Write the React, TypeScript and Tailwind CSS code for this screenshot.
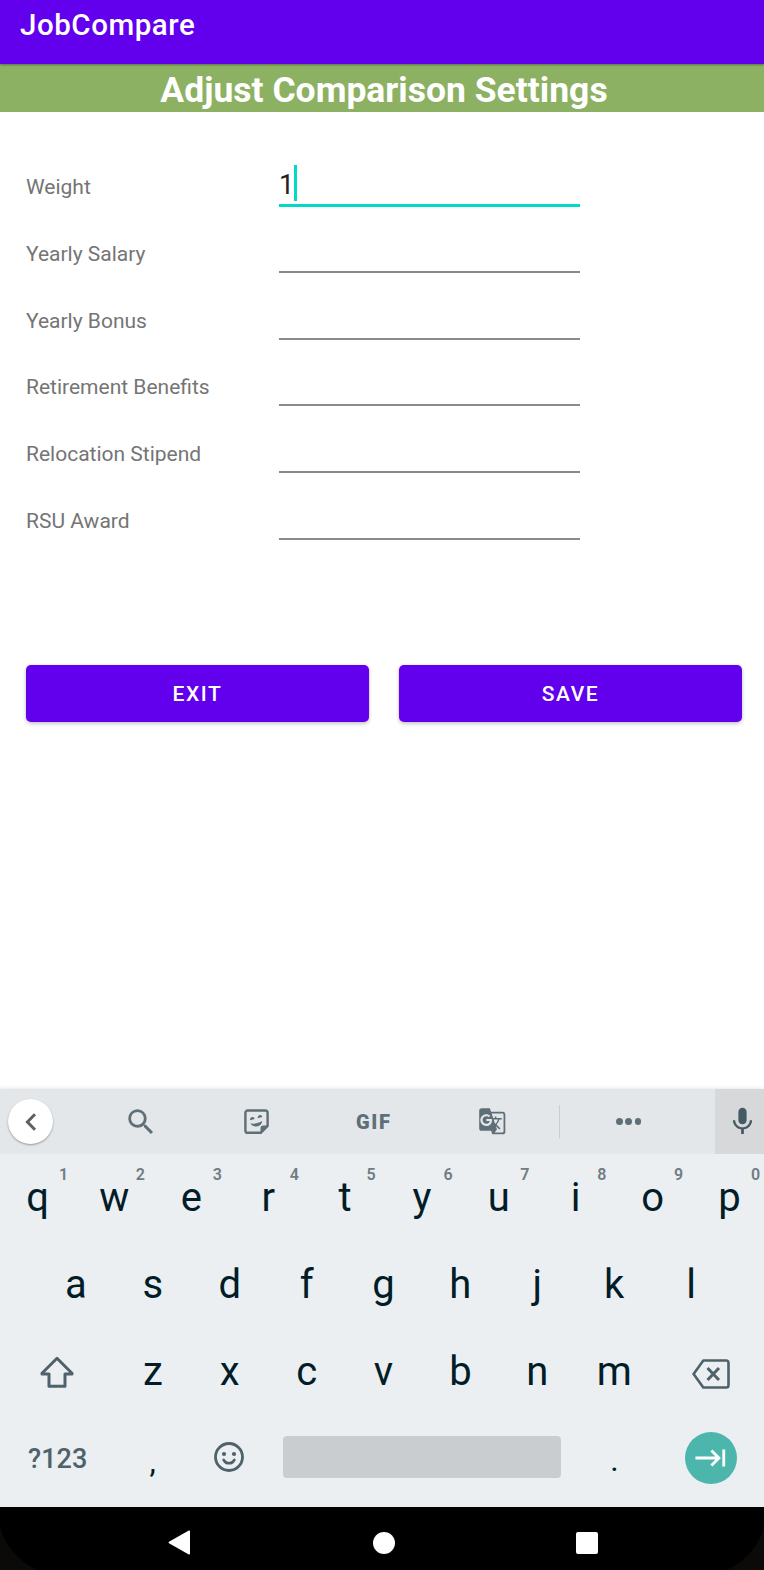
import type { ReactNode } from "react";
import { MdGTranslate, MdKeyboardTab, MdMic, MdSearch } from "react-icons/md";

const fields = ["Yearly Salary", "Yearly Bonus", "Retirement Benefits", "Relocation Stipend", "RSU Award"];

function Label({ children }: { children: ReactNode }) {
  return <label className="w-[253px] pt-[34px] text-[21px] leading-[26px] text-[#757575]">{children}</label>;
}

function Button({ children }: { children: ReactNode }) {
  return (
    <button className="h-[57px] flex-1 rounded-[5px] bg-[#6200ee] pt-[3px] text-[21px] font-medium tracking-[1.6px] text-white shadow-[0_2px_4px_rgba(0,0,0,0.2),0_0_2px_rgba(0,0,0,0.15)]">
      {children}
    </button>
  );
}

function Key({ letter, hint }: { letter: string; hint?: string }) {
  return (
    <div className="relative flex h-full w-[76.9px] items-center justify-center text-[40px] text-[#021d27]">
      {letter}
      {hint && (
        <span className="absolute left-[54.5px] top-[11px] w-5 text-center text-[16px] leading-5 font-semibold text-[#707c82]">
          {hint}
        </span>
      )}
    </div>
  );
}

function Row({ children }: { children: ReactNode }) {
  return <div className="-ml-[1px] flex h-[87px] w-[769px] items-center justify-center">{children}</div>;
}

export default function App() {
  return (
    <div className="flex h-[1570px] w-[764px] flex-col overflow-hidden bg-white font-['Roboto',sans-serif]">
      <header className="relative z-10 h-16 shrink-0 bg-[#6200ee] pl-5 pt-2 shadow-[0_1px_2px_rgba(0,0,0,0.35)]">
        <h1 className="text-[29.5px] leading-[34px] font-medium tracking-[0.55px] text-white">JobCompare</h1>
      </header>
      <h2 className="h-12 shrink-0 bg-[#8db162] pt-1 pl-1 text-center text-[35.5px] leading-[44px] font-bold text-white">
        Adjust Comparison Settings
      </h2>

      <main className="flex flex-1 flex-col pt-7">
        <div className="flex h-[66.8px] pl-[26px]">
          <Label>Weight</Label>
          <div className="flex h-[67px] w-[301px] items-start border-b-[3px] border-[#03dac5] pt-[25px]">
            <span className="w-[15px] pt-[2px] text-[27px] leading-9 text-[#212121]">1</span>
            <span className="h-9 w-[3px] bg-[#03dac5]" />
          </div>
        </div>
        {fields.map((name) => (
          <div key={name} className="flex h-[66.8px] pl-[26px]">
            <Label>{name}</Label>
            <div className="h-[66px] w-[301px] border-b-2 border-[#8a8a8a]" />
          </div>
        ))}
        <div className="mt-[124px] flex gap-[30px] pl-[26px] pr-[22px]">
          <Button>EXIT</Button>
          <Button>SAVE</Button>
        </div>
      </main>

      <section className="h-[418px] shrink-0 bg-[#ebeff2] shadow-[0_0_4px_rgba(0,0,0,0.15)]">
        <div className="flex h-[65px] items-center bg-[#e3e7ea] text-[#5f6f77]">
          <div className="ml-2 flex size-[45px] items-center justify-center rounded-full bg-white shadow-[0_1px_2px_rgba(0,0,0,0.35)]">
            <svg viewBox="0 0 12 18" className="h-[18px] w-3" fill="none" stroke="#616161" strokeWidth="3">
              <path d="M10 1.2 2.4 9l7.6 7.8" />
            </svg>
          </div>
          <MdSearch className="ml-[71px] size-[34px]" />
          <svg viewBox="0 0 25 25" className="ml-[86px] size-[25px]" fill="none" stroke="currentColor" strokeWidth="2.4">
            <path d="M3.8 1.5h17.4a2.4 2.4 0 0 1 2.4 2.4V17l-6.8 6.8h-13a2.4 2.4 0 0 1-2.4-2.4V3.9a2.4 2.4 0 0 1 2.4-2.4Z" />
            <path d="M16.5 24v-4.6a2.8 2.8 0 0 1 2.8-2.8h4.5L16.5 24Z" fill="currentColor" stroke="none" />
            <path d="M6.5 14.5c4.3.5 8-.3 11.8-2.5-.5 3.3-2.7 5.3-5.7 5.5-2.7.1-5-1-6.1-3Z" fill="currentColor" stroke="none" />
            <path d="M6 11.3c-.2-3.6 3.9-4.5 4.6-1.3ZM13.7 9.2c-.2-3.600 3.900-4.500 4.600-1.300Z" fill="currentColor" stroke="none" />
          </svg>
          <span className="ml-[87px] w-[36px] text-[20px] leading-6 font-black tracking-[1.6px]">GIF</span>
          <MdGTranslate className="ml-[86px] size-[28.5px]" />
          <div className="ml-[52.5px] h-[33px] w-px bg-[#c9ced1]" />
          <div className="ml-[56px] flex w-[25px] justify-between">
            <i className="size-[6.5px] rounded-full bg-[#5f6f77]" />
            <i className="size-[6.5px] rounded-full bg-[#5f6f77]" />
            <i className="size-[6.5px] rounded-full bg-[#5f6f77]" />
          </div>
          <div className="ml-auto flex h-full w-[49px] items-center justify-center bg-[#d7d8d9] pl-[6px] text-[#455a64]">
            <MdMic className="size-[33px] shrink-0" />
          </div>
        </div>

        <Row>
          {"qwertyuiop".split("").map((c, i) => (
            <Key key={c} letter={c} hint={String((i + 1) % 10)} />
          ))}
        </Row>
        <Row>
          {"asdfghjkl".split("").map((c) => (
            <Key key={c} letter={c} />
          ))}
        </Row>
        <Row>
          <div className="flex w-[115px] justify-center">
            <svg viewBox="0 0 34 32" className="h-8 w-[34px]" fill="none" stroke="#4f616a" strokeWidth="3" strokeLinejoin="round">
              <path d="M17 2.3 2 17.3v.7h7v12.2h16V18h7v-.7Z" />
            </svg>
          </div>
          {"zxcvbnm".split("").map((c) => (
            <Key key={c} letter={c} />
          ))}
          <div className="flex w-[115px] justify-center pt-1 pl-px">
            <svg viewBox="0 0 38 30" className="h-[30px] w-[38px]" fill="none" stroke="#4f616a" strokeWidth="2.6" strokeLinejoin="round">
              <path d="M11.3 1.5h23a2.2 2.2 0 0 1 2.2 2.2v22.6a2.2 2.2 0 0 1-2.2 2.2h-23L1.6 15Z" />
              <path d="m15.5 9 11.500 12M27 9 15.500 21" strokeWidth="3" />
            </svg>
          </div>
        </Row>
        <Row>
          <div className="flex w-[115px] justify-center pt-px pl-[2px] text-[27px] font-medium text-[#4f616a]">?123</div>
          <div className="flex w-[76.9px] justify-center pt-[4px] text-[32px] text-[#021d27]">,</div>
          <div className="flex w-[76.9px] justify-center pb-1">
            <svg viewBox="0 0 30 30" className="size-[30px]" fill="none" stroke="#4f616a" strokeWidth="2.8">
              <circle cx="15" cy="15" r="13.5" />
              <path d="M9.6 17.8c1.3 2.6 3.2 3.5 5.4 3.5s4.1-.9 5.4-3.5" strokeLinecap="round" strokeWidth="2.6" />
              <circle cx="10" cy="12" r="2.1" fill="#4f616a" stroke="none" />
              <circle cx="20" cy="12" r="2.1" fill="#4f616a" stroke="none" />
            </svg>
          </div>
          <div className="mx-[15px] mb-1 h-[42px] w-[278px] rounded-[4px] bg-[#c9cdd0]" />
          <div className="flex w-[76.9px] justify-center pt-[2px] text-[32px] text-[#021d27]">.</div>
          <div className="flex w-[115px] justify-center pb-[2px] pl-px">
            <div className="flex size-[52px] items-center justify-center rounded-full bg-[#4db6ac] text-white">
              <MdKeyboardTab className="size-[34px]" />
            </div>
          </div>
        </Row>
      </section>

      <nav className="relative flex h-[63px] shrink-0 items-center bg-black pt-2">
        <svg viewBox="0 0 22 25" className="ml-[168px] h-[25px] w-[22px]" fill="#fff">
          <path d="M20.8.6Q22 0 22 1.4v22.2q0 1.4-1.200.8L1 13.3Q0 12.5 1 11.7Z" />
        </svg>
        <div className="ml-[183px] size-[22px] rounded-full bg-white" />
        <div className="ml-[181px] size-[22px] rounded-[2px] bg-white" />
        <svg viewBox="0 0 38 43" className="absolute bottom-0 left-0 h-[43px] w-[38px]" fill="#0b0a08">
          <path d="M0 0C5 19 20 36 38 43H0Z" />
        </svg>
        <svg viewBox="0 0 38 43" className="absolute right-0 bottom-0 h-[43px] w-[38px]" fill="#0b0a08">
          <path d="M38 0C33 19 18 36 0 43h38Z" />
        </svg>
      </nav>
    </div>
  );
}
